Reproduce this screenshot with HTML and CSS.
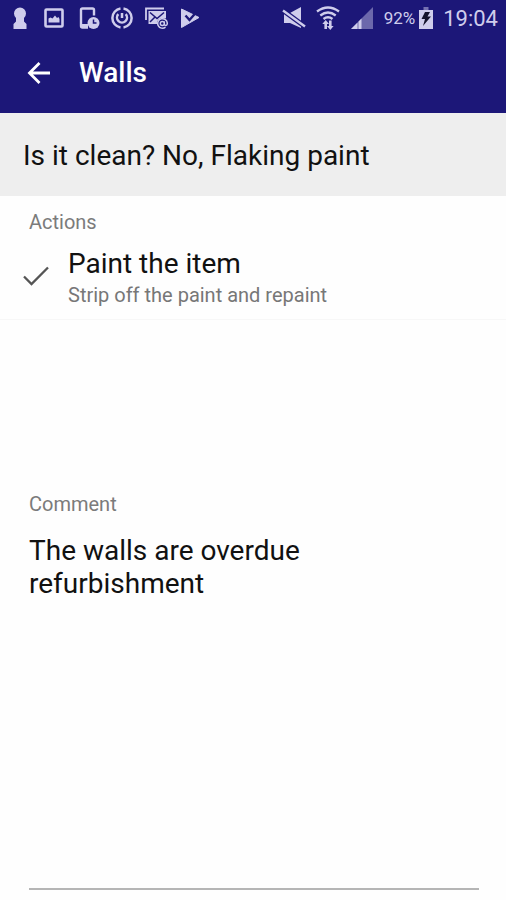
FILE: index.html
```html
<!DOCTYPE html>
<html lang="en">
<head>
<meta charset="utf-8">
<meta name="viewport" content="width=device-width, initial-scale=1">
<title>Walls</title>
<link rel="stylesheet" href="styles.css">
</head>
<body>
<header class="header">
  <div class="status">
    <div class="status-group">
      <svg class="icon" viewBox="0 0 24 24"><path fill="currentColor" d="M12 1.500a6 6 0 0 1 6 6q0 2.500-2 4.500v3.500l2.500 2.500v5h-13v-5L8 15.500V12q-2-2-2-4.500a6 6 0 0 1 6-6z"/></svg>
      <svg class="icon" viewBox="0 0 24 24"><rect x="3.500" y="3.500" width="17" height="17" rx="1" fill="none" stroke="currentColor" stroke-width="2.600"/><path fill="currentColor" d="M6.500 16.500v-4l2-1 2 1 2.500-3 2 2.500 1.500-1 1 2v3.500z"/></svg>
      <svg class="icon" viewBox="0 0 24 24"><path fill="none" stroke="currentColor" stroke-width="2.400" d="M18 9.500V4q0-1.500-1.500-1.500h-10Q5 2.500 5 4v16q0 1.500 1.500 1.500H12"/><path fill="currentColor" d="M5 18h7v4H6z"/><circle cx="17.500" cy="17" r="6" fill="currentColor"/><path class="cutout" d="M17.500 13.500V17h3"/></svg>
      <svg class="icon" viewBox="0 0 24 24"><g fill="none" stroke="currentColor" stroke-width="2.500"><path d="M13.500 2.600a9.500 9.500 0 0 1 0 18.800M10.500 21.400a9.500 9.500 0 0 1 0-18.800"/><path d="M8.300 8.200a5 5 0 1 0 7.400 0M12 7V12"/></g></svg>
      <svg class="icon" viewBox="0 0 24 24"><path fill="none" stroke="currentColor" stroke-width="1.800" d="M2 14V2.500h18"/><path fill="currentColor" d="M4.500 5H22v7l-7 6H4.500z"/><path class="cutout" d="M6 6.500l7 6 7-6M6 16l5-5"/><circle class="badge" cx="18.500" cy="17.500" r="5.500"/><path fill="none" stroke="currentColor" stroke-width="1.500" d="M21.500 21.200a4.800 4.800 0 1 1 1.800-4c0 3-3 3-3 .500v-2.500M20.300 17.500a2 2 0 1 1-4 0 2 2 0 0 1 4 0"/></svg>
      <svg class="icon" viewBox="0 0 24 24"><path fill="currentColor" stroke="currentColor" stroke-linejoin="round" d="M3.500 3L21 11.500 3.500 21.500z"/><path class="cutout cutout-wide" d="M7.500 9.500l4 4.500L18 6.500"/></svg>
    </div>
    <div class="status-group">
      <svg class="icon" viewBox="0 0 24 24"><path fill="currentColor" d="M2 7h6l11-6v21L8 17H2z"/><path class="cutout cutout-heavy" d="M1 4.500l22 16"/><path fill="none" stroke="currentColor" stroke-width="2.400" d="M1 4.500l22 16"/></svg>
      <svg class="icon" viewBox="0 0 24 24"><g fill="none" stroke="currentColor" stroke-width="2.300"><path d="M1 5.500q11-8 22 0M4.300 9.500q7.700-6 15.400 0M7.500 13q4.500-3.500 9 0"/><path stroke-width="2.600" d="M9.700 23v-7M14.300 14.500v7"/></g><path fill="currentColor" d="M6.300 18l3.400-4 3.300 4zM11 20h6.600l-3.300 4z"/></svg>
      <svg class="icon" viewBox="0 0 24 24"><path fill="currentColor" opacity=".45" d="M1 23L23 1v22z"/><path fill="currentColor" d="M1 23l6.500-6.500V23zM8.500 15.500L11.500 12.500V23h-3z"/></svg>
      <span class="percent">92%</span>
      <svg class="battery" viewBox="0 0 14 24"><path fill="currentColor" opacity=".5" d="M4.500 1h5v3h-5z"/><path fill="currentColor" d="M0 4h14v19H0z"/><path class="bolt" d="M6 6h5L8.500 10.500H12L4 20l2-7H2.500z"/></svg>
      <time class="clock">19:04</time>
    </div>
  </div>
  <div class="toolbar">
    <button class="back" type="button" aria-label="Back"><svg class="icon" viewBox="0 0 24 24"><path fill="none" stroke="currentColor" stroke-width="2.800" d="M23 12H3M12.500 2L2.500 12l10 10"/></svg></button>
    <h1 class="title">Walls</h1>
  </div>
</header>
<main class="content">
  <h2 class="banner">Is it clean? No, Flaking paint</h2>
  <section class="actions">
    <h3 class="label">Actions</h3>
    <div class="action">
      <svg class="check" viewBox="0 0 26 22"><path fill="none" stroke="currentColor" stroke-width="2.300" d="M1 11.500l7.500 7.500L25 2.500"/></svg>
      <div>
        <div class="action-name">Paint the item</div>
        <div class="action-note">Strip off the paint and repaint</div>
      </div>
    </div>
  </section>
  <section class="comment">
    <label class="label" for="comment">Comment</label>
    <textarea class="comment-text" id="comment" spellcheck="false">The walls are overdue
refurbishment</textarea>
  </section>
</main>
</body>
</html>
```

FILE: styles.css
```css
* {
  box-sizing: border-box;
}

body {
  margin: 0;
  min-height: 100vh;
  display: flex;
  flex-direction: column;
  background: #fefefe;
  color: #111;
  font-family: Roboto, sans-serif;
}

h1,
h2,
h3 {
  margin: 0;
  font-weight: 400;
}

.header {
  background: #1c1778;
  color: #fff;
}

.status {
  display: flex;
  justify-content: space-between;
  height: 36px;
  padding: 0 8px;
  color: #cfcdec;
}

.status-group {
  display: flex;
  align-items: center;
  gap: 10px;
}

.icon {
  display: block;
  width: 24px;
  height: 24px;
}

.cutout {
  fill: none;
  stroke: #1c1778;
  stroke-width: 1.5;
}

.cutout-wide {
  stroke-width: 2.4;
}

.cutout-heavy {
  stroke-width: 5;
}

.badge {
  fill: #1c1778;
}

.percent {
  font-size: 17px;
  margin-right: -6px;
}

.battery {
  width: 14px;
  height: 24px;
}

.bolt {
  fill: #14132c;
}

.clock {
  font-size: 22px;
}

.toolbar {
  display: flex;
  align-items: center;
  gap: 28px;
  height: 77px;
  padding: 0 27px 4px;
}

.back {
  padding: 0;
  border: 0;
  background: none;
  color: inherit;
}

.title {
  font-size: 28px;
  font-weight: 500;
}

.content {
  flex: 1;
  display: flex;
  flex-direction: column;
}

.banner {
  padding: 26px 23px 24px;
  background: #eee;
  font-size: 28px;
  line-height: 33px;
}

.actions {
  min-height: 282px;
  padding-top: 14px;
}

.label {
  display: block;
  padding: 0 29px;
  color: #7b7b7b;
  font-size: 20px;
  line-height: 24px;
}

.action {
  display: flex;
  align-items: center;
  gap: 19px;
  padding: 13px 23px 10px;
  border-bottom: 1px solid #f7f7f7;
}

.check {
  width: 26px;
  height: 22px;
  margin-bottom: 4px;
  color: #555;
}

.action-name {
  font-size: 28px;
  line-height: 34px;
}

.action-note {
  color: #777;
  font-size: 20px;
  line-height: 28px;
}

.comment {
  flex: 1;
  display: flex;
  flex-direction: column;
  padding: 14px 0 10px;
}

.comment-text {
  flex: 1;
  margin: 18px 27px 0 29px;
  padding: 0;
  border: 0;
  border-bottom: 2px solid #b5b5b5;
  outline: 0;
  resize: none;
  background: none;
  color: inherit;
  font: inherit;
  font-size: 28px;
  line-height: 33px;
}
```
